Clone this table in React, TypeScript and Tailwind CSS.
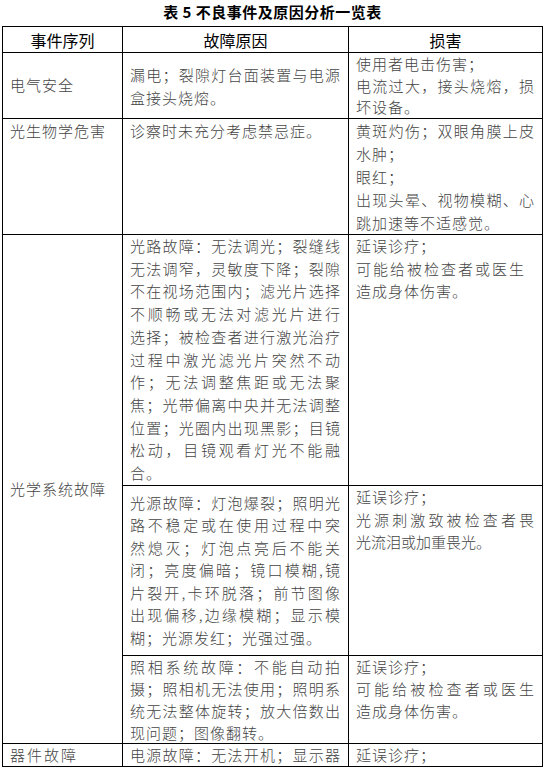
import React from 'react';

type Line = { text: string; full?: boolean; cls?: string };

// j = justified line (spread to the cell width), l = last / loose line
const j = (text: string): Line => ({ text, full: true });
const l = (text: string, cls?: string): Line => ({ text, cls });

const Lines = ({ lines, lead }: { lines: Line[]; lead: string }) => (
    <div className={lead}>
        {lines.map((ln, i) => (
            <div
                key={i}
                className={
                    (ln.full ? 'whitespace-nowrap text-justify [text-align-last:justify]' : 'whitespace-nowrap') +
                    (ln.cls ? ' ' + ln.cls : '')
                }
            >
                {ln.text}
            </div>
        ))}
    </div>
);

const cell = 'bg-white px-[7px] text-[15px] font-light tracking-[1px] text-[#444]';

export default function App() {
    return (
        <div className="w-[545px] h-[768px] bg-white overflow-hidden font-['Noto_Sans_CJK_SC',sans-serif]">
            {/* Title */}
            <div className="h-[25px] flex items-center justify-center text-[15px] font-bold text-black tracking-[0.5px]">
                表 5 不良事件及原因分析一览表
            </div>

            {/* Table */}
            <div className="mt-px ml-[2px] w-[541px] grid grid-cols-[119px_225px_193px] grid-rows-[25px_65px_115px_250px_169px_87px_22px] gap-px bg-black p-px">
                {/* Header */}
                <div className="bg-white flex items-center justify-center text-[16px] text-black">事件序列</div>
                <div className="bg-white flex items-center justify-center text-[16px] text-black">故障原因</div>
                <div className="bg-white flex items-center justify-center text-[16px] text-black">损害</div>

                {/* 电气安全 */}
                <div className={`${cell} flex items-center tracking-[0.5px]`}>电气安全</div>
                <div className={`${cell} flex items-center`}>
                    <Lines lead="leading-[23px] w-full" lines={[j('漏电；裂隙灯台面装置与电源'), l('盒接头烧熔。')]} />
                </div>
                <div className={cell}>
                    <Lines
                        lead="leading-[21.5px]"
                        lines={[l('使用者电击伤害；'), j('电流过大，接头烧熔，损'), l('坏设备。')]}
                    />
                </div>

                {/* 光生物学危害 */}
                <div className={`${cell} leading-[23px] tracking-[0.5px]`}>光生物学危害</div>
                <div className={`${cell} leading-[23px]`}>诊察时未充分考虑禁忌症。</div>
                <div className={cell}>
                    <Lines
                        lead="leading-[23px]"
                        lines={[
                            j('黄斑灼伤；双眼角膜上皮'),
                            l('水肿；'),
                            l('眼红；'),
                            j('出现头晕、视物模糊、心'),
                            l('跳加速等不适感觉。'),
                        ]}
                    />
                </div>

                {/* 光学系统故障 spans three sub rows */}
                <div className={`${cell} row-span-3 flex items-center tracking-[0.5px]`}>光学系统故障</div>
                <div className={cell}>
                    <Lines
                        lead="leading-[22.7px]"
                        lines={[
                            j('光路故障：无法调光；裂缝线'),
                            j('无法调窄，灵敏度下降；裂隙'),
                            j('不在视场范围内；滤光片选择'),
                            j('不顺畅或无法对滤光片进行'),
                            j('选择；被检查者进行激光治疗'),
                            j('过程中激光滤光片突然不动'),
                            j('作；无法调整焦距或无法聚'),
                            j('焦；光带偏离中央并无法调整'),
                            j('位置；光圈内出现黑影；目镜'),
                            j('松动，目镜观看灯光不能融'),
                            l('合。'),
                        ]}
                    />
                </div>
                <div className={cell}>
                    <Lines
                        lead="leading-[22.7px]"
                        lines={[l('延误诊疗；'), l('可能给被检查者或医生', 'tracking-[2px]'), l('造成身体伤害。')]}
                    />
                </div>

                <div className={`${cell} flex items-center`}>
                    <Lines
                        lead="leading-[22.5px] w-full"
                        lines={[
                            j('光源故障：灯泡爆裂；照明光'),
                            j('路不稳定或在使用过程中突'),
                            j('然熄灭；灯泡点亮后不能关'),
                            j('闭；亮度偏暗；镜口模糊,镜'),
                            j('片裂开,卡环脱落；前节图像'),
                            j('出现偏移,边缘模糊；显示模'),
                            l('糊；光源发红；光强过强。'),
                        ]}
                    />
                </div>
                <div className={cell}>
                    <Lines
                        lead="leading-[22.5px]"
                        lines={[l('延误诊疗；'), j('光源刺激致被检查者畏'), l('光流泪或加重畏光。', 'tracking-[0px]')]}
                    />
                </div>

                <div className={cell}>
                    <Lines
                        lead="leading-[22px]"
                        lines={[
                            j('照相系统故障：不能自动拍'),
                            j('摄；照相机无法使用；照明系'),
                            j('统无法整体旋转；放大倍数出'),
                            l('现问题；图像翻转。'),
                        ]}
                    />
                </div>
                <div className={cell}>
                    <Lines
                        lead="leading-[22px]"
                        lines={[l('延误诊疗；'), j('可能给被检查者或医生'), l('造成身体伤害。')]}
                    />
                </div>

                {/* 器件故障 */}
                <div className={`${cell} leading-[22px] tracking-[2px]`}>器件故障</div>
                <div className={cell}>
                    <Lines lead="leading-[22px]" lines={[j('电源故障：无法开机；显示器')]} />
                </div>
                <div className={`${cell} leading-[22px]`}>延误诊疗；</div>
            </div>
        </div>
    );
}
